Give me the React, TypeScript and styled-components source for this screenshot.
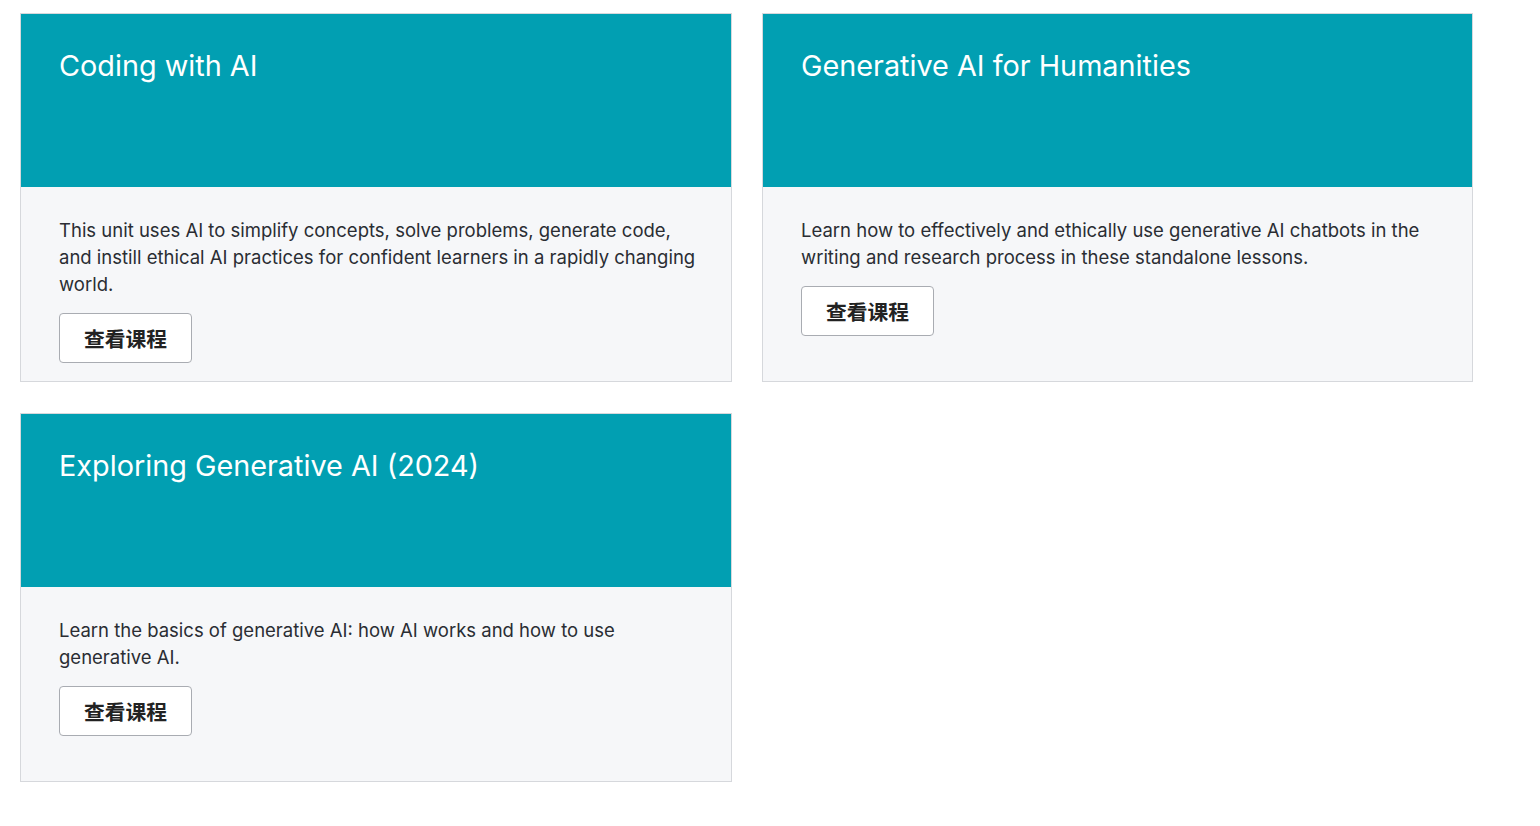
import React from 'react'
import styled, { createGlobalStyle } from 'styled-components'

const GlobalStyle = createGlobalStyle`
  html, body {
    margin: 0;
    padding: 0;
    background: #ffffff;
    font-family: 'Inter', 'Noto Sans CJK SC', sans-serif;
  }
`

const Page = styled.div`
  padding: 13px 20px;
`

const CardGrid = styled.div`
  display: grid;
  grid-template-columns: 712px 711px;
  column-gap: 30px;
  row-gap: 31px;
`

const Card = styled.div`
  height: 369px;
  box-sizing: border-box;
  border: 1px solid #d6d8dc;
  background: #f6f7f9;
  display: flex;
  flex-direction: column;
`

const CardHeader = styled.div`
  height: 173px;
  flex-shrink: 0;
  background: #019fb2;
  padding: 34px 38px;
  box-sizing: border-box;
`

const CardTitle = styled.h2`
  margin: 0;
  font-family: 'Inter', sans-serif;
  font-weight: 400;
  font-size: 28.8px;
  line-height: 36px;
  color: #ffffff;
`

const CardBody = styled.div`
  padding: 30px 32px 20px 38px;
`

const Description = styled.p`
  margin: 0 0 15px 0;
  font-family: 'Inter', sans-serif;
  font-size: 18.5px;
  line-height: 27px;
  color: #2a2d33;
`

const CourseButton = styled.button`
  height: 50px;
  padding: 0 24px;
  background: #ffffff;
  border: 1px solid #a9acb2;
  border-radius: 4px;
  font-family: 'Noto Sans CJK SC', sans-serif;
  font-weight: 700;
  font-size: 20.75px;
  color: #222222;
  cursor: pointer;
`

interface Course {
  title: string
  description: string
}

const courses: Course[] = [
  {
    title: 'Coding with AI',
    description:
      'This unit uses AI to simplify concepts, solve problems, generate code, and instill ethical AI practices for confident learners in a rapidly changing world.',
  },
  {
    title: 'Generative AI for Humanities',
    description:
      'Learn how to effectively and ethically use generative AI chatbots in the writing and research process in these standalone lessons.',
  },
  {
    title: 'Exploring Generative AI (2024)',
    description:
      'Learn the basics of generative AI: how AI works and how to use generative AI.',
  },
]

export default function App() {
  return (
    <>
      <GlobalStyle />
      <Page>
        <CardGrid>
          {courses.map(course => (
            <Card key={course.title}>
              <CardHeader>
                <CardTitle>{course.title}</CardTitle>
              </CardHeader>
              <CardBody>
                <Description>{course.description}</Description>
                <CourseButton>查看课程</CourseButton>
              </CardBody>
            </Card>
          ))}
        </CardGrid>
      </Page>
    </>
  )
}
